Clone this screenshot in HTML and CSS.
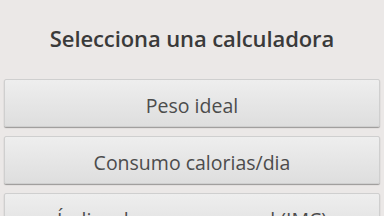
FILE: index.html
```html
<!DOCTYPE html>
<html lang="es">
<head>
<meta charset="utf-8">
<link rel="stylesheet" href="styles.css">
</head>
<body>
<div class="screen">
  <h1 class="title">Selecciona una calculadora</h1>
  <div class="list">
    <button class="btn">Peso ideal</button>
    <button class="btn">Consumo calorias/dia</button>
    <button class="btn">Índice de masa corporal (IMC)</button>
  </div>
</div>
</body>
</html>
```
FILE: styles.css
```css
html, body {
  margin: 0;
  padding: 0;
  background: #ebe8e7;
  overflow: hidden;
}
.screen {
  width: 384px;
  height: 216px;
  overflow: hidden;
  font-family: "Open Sans", "Noto Sans", sans-serif;
}
.title {
  margin: 0;
  height: 76px;
  display: flex;
  align-items: center;
  justify-content: center;
  font-size: 22px;
  font-weight: 600;
  color: #3a3a3a;
  letter-spacing: -0.1px;
}
.list {
  display: flex;
  flex-direction: column;
  gap: 9px;
  padding: 3px 4px 0 4px;
}
.btn {
  height: 48px;
  flex: none;
  border: 1px solid #cfcfcf;
  border-radius: 2px;
  background: linear-gradient(#eeeeee, #dedede);
  box-shadow: 0 1px 1px rgba(0, 0, 0, 0.35);
  font-family: "Open Sans", "Noto Sans", sans-serif;
  font-size: 19.5px;
  color: #4c4c4c;
  padding: 4px 0 0 0;
}
```
